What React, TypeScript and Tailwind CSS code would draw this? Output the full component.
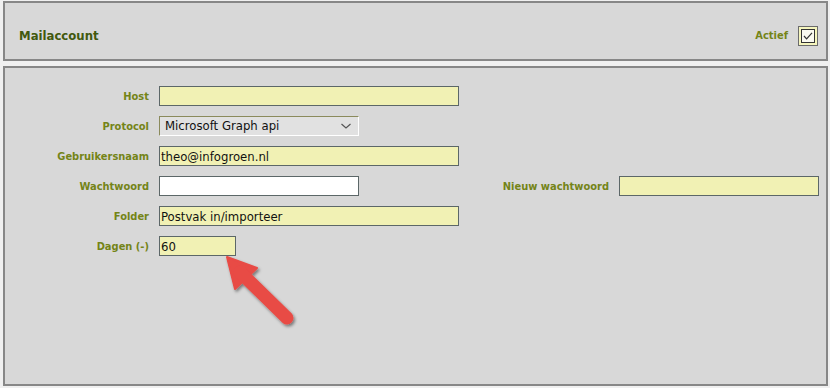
const labelCls =
    'w-[154px] shrink-0 pr-[10px] text-right text-[11px] font-bold text-[#748417] leading-none'
const inputCls =
    'h-[20px] border border-[#5c6768] px-[1px] text-[13px] text-[#111] leading-[18px] outline-none'

function Row({ label, children }: { label: string; children: React.ReactNode }) {
    return (
        <div className="flex h-[20px] items-center">
            <div className={labelCls}>{label}</div>
            {children}
        </div>
    )
}

export default function App() {
    return (
        <div
            className="relative h-[388px] w-[830px] overflow-hidden bg-[#f0f0f0] pl-[3px] pr-[2px] pt-[1px]"
            style={{ fontFamily: '"DejaVu Sans Condensed", "DejaVu Sans", Tahoma, sans-serif' }}
        >
            {/* header panel */}
            <div className="flex h-[60px] items-center justify-between border-2 border-[#878787] bg-[#d8d8d8] pl-[14px] pr-[8px] pt-[10px]">
                <h1 className="text-[13px] font-bold text-[#41590e]">Mailaccount</h1>
                <div className="flex items-center gap-[10px]">
                    <span className="text-[11px] font-bold text-[#748417]">Actief</span>
                    <div className="flex h-[20px] w-[20px] items-center justify-center border border-[#6b6b6b] bg-[#f5f5bd]">
                        <div className="flex h-[14px] w-[14px] items-center justify-center border border-[#333] bg-[#fafaf0]">
                            <svg width="12" height="12" viewBox="0 0 12 12">
                                <path d="M2 6 L4.6 8.8 L10 2.8" fill="none" stroke="#333" strokeWidth="1.2" />
                            </svg>
                        </div>
                    </div>
                </div>
            </div>

            {/* form panel */}
            <div className="mt-[5px] flex h-[320px] flex-col gap-[10px] border-2 border-[#878787] bg-[#d8d8d8] pt-[18px]">
                <Row label="Host">
                    <input className={`${inputCls} w-[300px] bg-[#f1f1b4]`} defaultValue="" />
                </Row>
                <Row label="Protocol">
                    <div className="flex h-[20px] w-[200px] items-center justify-between border border-b-white border-l-[#8a8a5c] border-r-white border-t-[#8a8a5c] bg-[#e1e1e1] pl-[5px] pr-[6px] text-[13px] text-[#111]">
                        <span>Microsoft Graph api</span>
                        <svg width="12" height="8" viewBox="0 0 12 8">
                            <path d="M1.5 2 L6 6 L10.5 2" fill="none" stroke="#555" strokeWidth="1.2" />
                        </svg>
                    </div>
                </Row>
                <Row label="Gebruikersnaam">
                    <input className={`${inputCls} w-[300px] bg-[#f1f1b4]`} defaultValue="theo@infogroen.nl" />
                </Row>
                <Row label="Wachtwoord">
                    <input className={`${inputCls} w-[200px] bg-white`} type="password" defaultValue="" />
                    <div className="w-[260px] shrink-0 pr-[10px] text-right text-[11px] font-bold text-[#748417] leading-none">
                        Nieuw wachtwoord
                    </div>
                    <input className={`${inputCls} w-[200px] bg-[#f1f1b4]`} defaultValue="" />
                </Row>
                <Row label="Folder">
                    <input className={`${inputCls} w-[300px] bg-[#f1f1b4]`} defaultValue="Postvak in/importeer" />
                </Row>
                <Row label="Dagen (-)">
                    <input className={`${inputCls} w-[77px] bg-[#f1f1b4]`} defaultValue="60" />
                </Row>
            </div>

            {/* annotation arrow */}
            <svg className="absolute left-[210px] top-[245px]" width="100" height="90" viewBox="210 245 100 90">
                <defs>
                    <filter id="sh" x="-30%" y="-30%" width="160%" height="160%">
                        <feDropShadow dx="1.5" dy="2" stdDeviation="1.5" floodColor="#000" floodOpacity="0.45" />
                    </filter>
                </defs>
                <g filter="url(#sh)" fill="#e84b45" stroke="#e84b45">
                    <polygon points="227,257 235,289 257,268" strokeWidth="2" strokeLinejoin="round" />
                    <line x1="240" y1="272" x2="287" y2="318" strokeWidth="13" strokeLinecap="round" />
                </g>
            </svg>
        </div>
    )
}
